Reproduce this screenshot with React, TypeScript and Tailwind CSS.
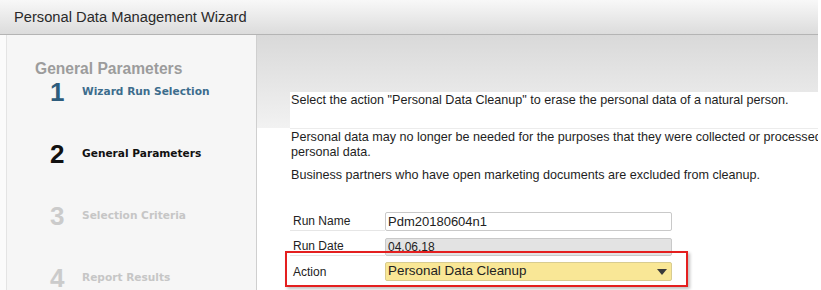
const steps = [
  { n: '1', label: 'Wizard Run Selection', num: 'text-[#2d5c7c]', text: 'text-[#3d6d8d]' },
  { n: '2', label: 'General Parameters', num: 'text-[#111111]', text: 'text-[#111111]' },
  { n: '3', label: 'Selection Criteria', num: 'text-[#cbcbcb]', text: 'text-[#c6c6c6]' },
  { n: '4', label: 'Report Results', num: 'text-[#cbcbcb]', text: 'text-[#c6c6c6]' },
];

function Sidebar() {
  return (
    <div className="flex h-full w-[257px] shrink-0 border-r border-[#cfcfcf] bg-[#f6f6f6]">
      <div className="w-[7px] shrink-0 border-r border-[#e4e4e4] bg-[#fbfbfb]" />
      <div className="flex flex-col pl-[28px] pt-[25px]">
        <div className="text-[15.6px] font-bold leading-[18px] text-[#9c9c9c]">General Parameters</div>
        <div className="ml-[15px] mt-[2px] flex flex-col gap-[38px]">
          {steps.map((s) => (
            <div key={s.n} className="flex h-[24px] items-center">
              <div className={`w-[32px] text-[26px] font-bold leading-none ${s.num}`}>{s.n}</div>
              <div
                className={`text-[10.6px] font-bold ${s.text}`}
                style={{ fontFamily: '"DejaVu Sans", Verdana, sans-serif' }}
              >
                {s.label}
              </div>
            </div>
          ))}
        </div>
      </div>
    </div>
  );
}

function Field({ label, children, line = true }: { label: string; children: React.ReactNode; line?: boolean }) {
  return (
    <div className="flex h-[19px] items-center">
      <div className={`flex h-full w-[95px] items-center pl-[3px] text-[12px] text-[#222] ${line ? 'border-b border-[#e6e6e6]' : ''}`}>
        {label}
      </div>
      {children}
    </div>
  );
}

function Content() {
  return (
    <div className="relative flex min-w-0 flex-1 flex-col bg-white">
      <div className="h-[93px] bg-gradient-to-b from-[#d9d9d9] to-[#f2f2f2] pl-[33px] pt-[57px]">
        <div className="h-[36px] bg-white pl-[1px] pt-[1px] text-[12.6px] leading-[15px] text-[#1e1e1e] whitespace-nowrap">
          Select the action "Personal Data Cleanup" to erase the personal data of a natural person.
        </div>
      </div>
      <div className="ml-[33px] overflow-hidden border-t border-[#ececec] pl-[1px] pt-[1px] text-[12.6px] leading-[15px] text-[#1e1e1e]">
        <div className="whitespace-nowrap">
          Personal data may no longer be needed for the purposes that they were collected or processed for, and you may want to erase the
        </div>
        <div>personal data.</div>
        <div className="mt-[8px] whitespace-nowrap">
          Business partners who have open marketing documents are excluded from cleanup.
        </div>
      </div>
      <div className="ml-[33px] mt-[29px] flex flex-col gap-[6px]">
        <Field label="Run Name">
          <div className="flex h-[19px] w-[287px] items-center rounded-[2px] border border-[#c9c9c9] bg-white px-[2px] text-[13px] text-[#222]">
            Pdm20180604n1
          </div>
        </Field>
        <Field label="Run Date">
          <div className="flex h-[18px] w-[287px] items-center rounded-[2px] border border-[#c9c9c9] bg-[#e3e3e3] px-[2px] text-[12px] text-[#222]">
            04.06.18
          </div>
        </Field>
        <Field label="Action" line={false}>
          <div className="flex h-[19px] w-[287px] items-center justify-between rounded-[2px] border border-[#d8cc90] bg-[#f9e796] pl-[2px] pr-[4px] text-[13.4px] text-[#222]">
            <span>Personal Data Cleanup</span>
            <svg width="10" height="6" viewBox="0 0 10 6">
              <path d="M0 0 L10 0 L5 6 Z" fill="#3a3a3a" />
            </svg>
          </div>
        </Field>
      </div>
      {/* red annotation box */}
      <div className="pointer-events-none absolute left-[28px] top-[216px] h-[36px] w-[403px] border-2 border-[#e41f1f] shadow-[2px_2px_3px_rgba(0,0,0,0.25)]" />
    </div>
  );
}

export default function App() {
  return (
    <div
      className="h-[290px] w-[821px] overflow-hidden bg-white pr-[3px]"
      style={{ fontFamily: '"Liberation Sans", Arial, sans-serif' }}
    >
      <div className="flex h-full flex-col">
        <div className="flex h-[35px] shrink-0 items-center border-b border-[#b4b4b4] bg-gradient-to-b from-[#f8f8f8] to-[#dcdcdc] pl-[14px]">
          <span className="text-[14.7px] text-[#2a2a2a]">Personal Data Management Wizard</span>
        </div>
        <div className="flex min-h-0 flex-1">
          <Sidebar />
          <Content />
        </div>
      </div>
    </div>
  );
}
